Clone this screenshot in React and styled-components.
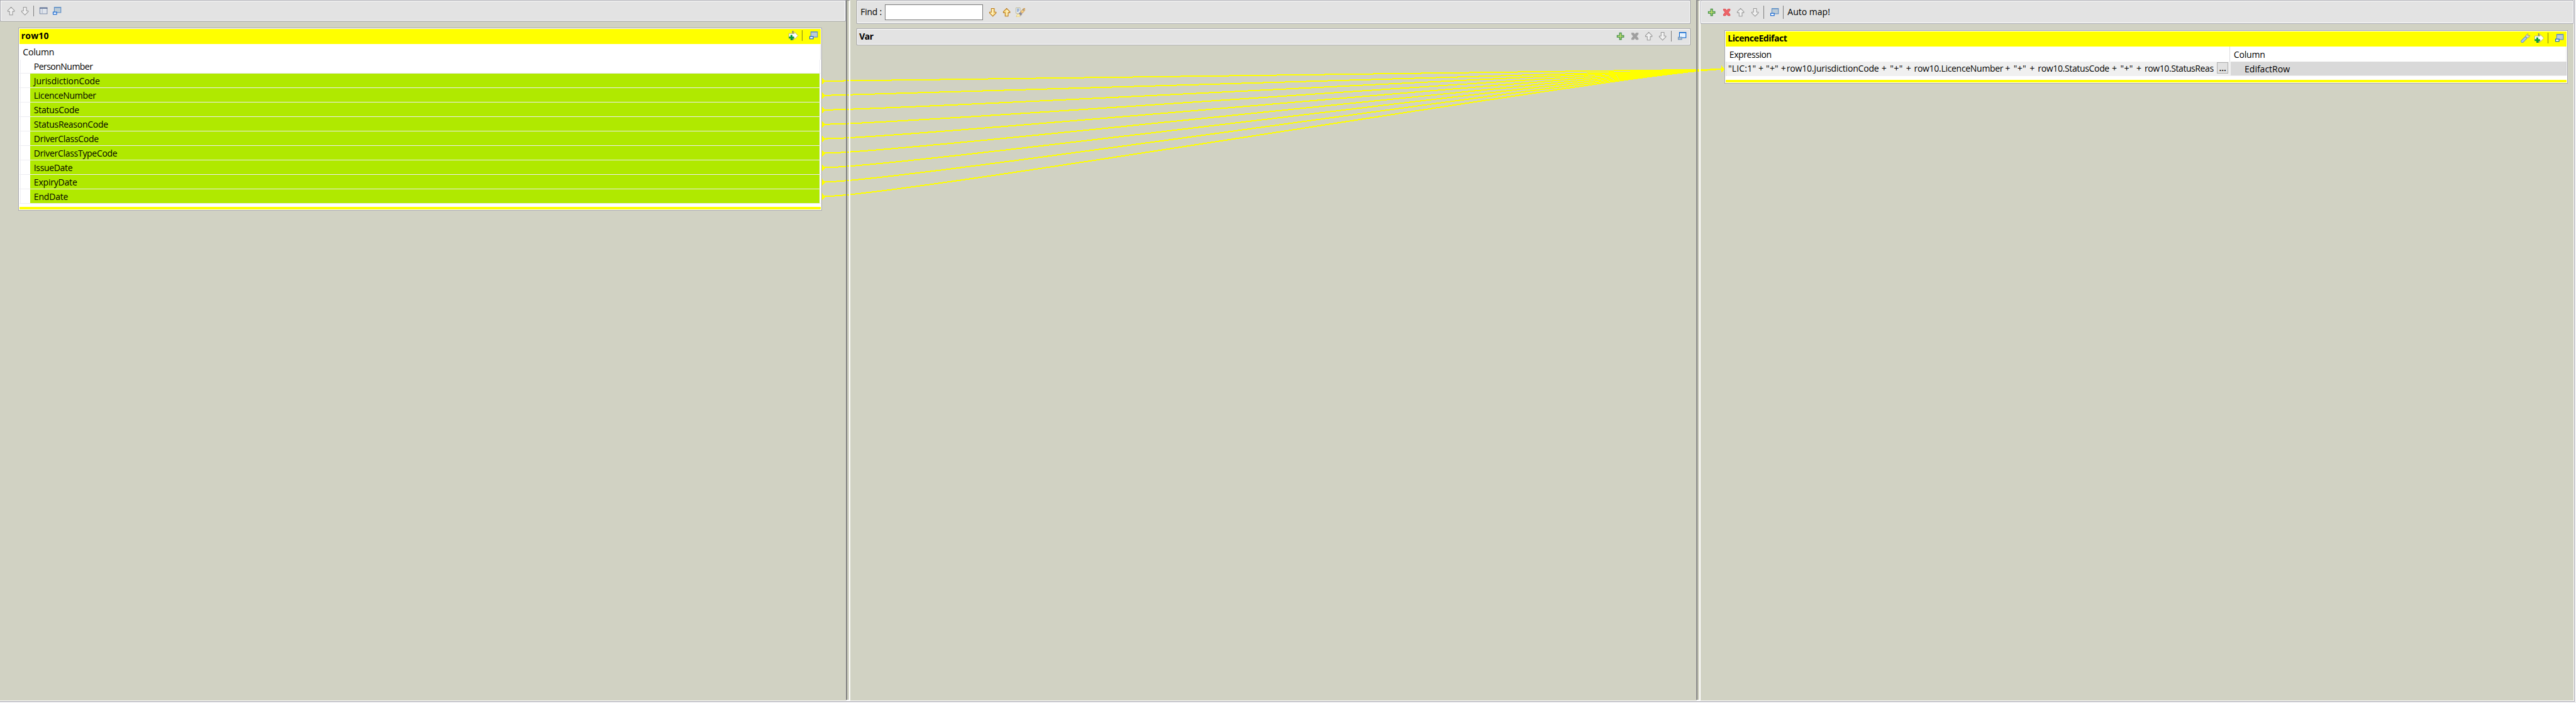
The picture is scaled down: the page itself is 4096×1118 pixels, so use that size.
import React from 'react';
import styled, { createGlobalStyle } from 'styled-components';

const K = 4096 / 4290;
const s = (n) => `${+(n * K).toFixed(3)}px`;

const C = {
  canvas: '#d1d2c3',
  bar: '#e3e3e3',
  edge: '#a9a9b0',
  yellow: '#ffff00',
  green: '#b0e900',
  line: '#ededf2',
};

const GlobalStyle = createGlobalStyle`
  * { box-sizing: border-box; }
  body { margin: 0; background: #f0f0f2; overflow: hidden; }
`;

const Window = styled.div`
  position: relative;
  width: 4096px;
  height: 1118px;
  background: #f0f0f2;
  color: #000;
  font-family: 'Open Sans', 'Noto Sans', sans-serif;
  font-size: 14px;
  line-height: 20px;
  white-space: pre;
  overflow: hidden;
`;

const Frame = styled.div`
  display: flex;
  width: ${s(4288)};
  height: ${s(1169)};
  background: ${C.canvas};
  border-right: 1px solid ${C.edge};
  border-bottom: 1px solid ${C.edge};
  box-shadow: inset -1px -1px 0 #fff;
`;

const Pane = styled.section`
  display: flex;
  flex-direction: column;
  flex: none;
  width: ${(p) => s(p.$w)};
  padding: ${(p) => p.$pad || '0'};
`;

const Sash = styled.div`
  position: relative;
  z-index: 2;
  flex: none;
  display: flex;
  width: ${s(7)};
  height: ${s(1167)};
  border-left: 1px solid #9c9c9c;
  border-top: 1px solid #8c8c8c;
  border-right: 2px solid #fff;
  border-bottom: 1px solid #fff;
  &::before {
    content: '';
    width: 1px;
    background: #6a6a6a;
  }
`;

const Toolbar = styled.header`
  display: flex;
  flex: none;
  align-items: flex-start;
  height: ${(p) => s(p.$h)};
  padding-left: ${(p) => s(p.$pl - 1)};
  background: ${C.bar};
  border: 1px solid ${C.edge};
  box-shadow: inset 0 0 0 1px #fff;
`;

const VarBar = styled(Toolbar)`
  margin-top: ${s(7)};
  justify-content: space-between;
`;

const IconGroup = styled.div`
  display: flex;
  align-items: flex-start;
  padding-right: ${(p) => s(p.$pr)};
`;

const Label = styled.span`
  flex: none;
  margin: ${(p) => p.$mt || 0}px 0 0 ${(p) => s(p.$ml || 0)};
  letter-spacing: ${(p) => p.$ls || 0}px;
  font-weight: ${(p) => (p.$bold ? 700 : 400)};
`;

const Svg = styled.svg`
  flex: none;
  display: block;
  width: ${s(16)};
  height: ${s(16)};
  margin: ${(p) => s(p.$mt)} 0 0 ${(p) => s(p.$ml || 0)};
`;

const Divider = styled.i`
  flex: none;
  width: 1px;
  height: ${(p) => s(p.$h || 18)};
  margin: ${(p) => s(p.$mt)} 0 0 ${(p) => s(p.$ml)};
  background: ${(p) => p.$c || '#808080'};
`;

const SearchField = styled.input`
  flex: none;
  width: ${s(164)};
  height: ${s(26)};
  margin: ${s(6)} 0 0 ${s(5)};
  padding: 0 4px;
  background: #fff;
  border: 1px solid #7a7a7a;
  border-radius: 0;
  font: inherit;
  outline: none;
`;

const Table = styled.article`
  position: relative;
  display: flex;
  flex-direction: column;
  flex: none;
  width: ${(p) => s(p.$w)};
  height: ${(p) => s(p.$h)};
  margin-top: ${(p) => s(p.$mt)};
  padding: 1px;
  background: #fff;
  border: 1px solid ${C.edge};
`;

const TableTitle = styled.div`
  display: flex;
  flex: none;
  justify-content: space-between;
  height: ${s(25)};
  padding-left: ${s(3.3)};
  background: ${C.yellow};
`;

const TableFoot = styled.div`
  flex: none;
  height: ${s(4)};
  margin-top: auto;
  background: ${C.yellow};
`;

const HeadRow = styled.div`
  display: flex;
  flex: none;
  height: ${s(26)};
  border-right: 1px solid #e4e4e6;
`;

const HeadCell = styled.div`
  width: ${(p) => (p.$w ? s(p.$w) : 'auto')};
  padding: 3px 0 0 ${(p) => s(p.$pl)};
  border-right: ${(p) => (p.$w ? '1px solid #dcdcde' : '0')};
`;

const Row = styled.div`
  display: flex;
  flex: none;
  height: ${s(24)};
  border-bottom: 1px solid ${C.line};
`;

const Gutter = styled.div`
  width: ${s(18)};
  margin-left: 1px;
  border-left: 1px solid ${C.line};
  margin-right: -1px;
`;

const Cell = styled.div`
  flex: 1;
  padding: 1.8px 0 0 ${s(6.3)};
  margin-right: 1px;
  border-right: 1px solid ${C.line};
  background: ${(p) => (p.$linked ? C.green : '#fff')};
  background-clip: padding-box;
  letter-spacing: ${(p) => p.$ls}px;
`;

const ExprRow = styled.div`
  display: flex;
  flex: none;
  height: ${s(24)};
  background: #f0f0f0;
  border-left: 1px solid #dedee2;
`;

const ExprText = styled.div`
  display: flex;
  flex: none;
  width: ${s(808)};
  padding: 0.6px 0 0 ${s(3)};
`;

const Token = styled.span`
  flex: none;
  width: ${(p) => s(p.$w)};
  letter-spacing: ${(p) => p.$ls}px;
  word-spacing: ${(p) => p.$ws || 0}px;
`;

const DotsButton = styled.button`
  flex: none;
  width: ${s(19)};
  height: ${s(18)};
  margin: ${s(1)} 0 0 ${s(9)};
  padding: 0;
  border: 1px solid #adadad;
  background: #e1e1e1;
  font: inherit;
  font-weight: 600;
  line-height: 15px;
  color: #000;
`;

const ColumnCell = styled.div`
  flex: 1;
  height: ${s(23)};
  margin-left: ${s(4)};
  padding: 2px 0 0 ${s(23)};
  background: #d9d9d9;
  box-shadow: inset -1px 0 0 #cacace;
`;

const Links = styled.svg`
  position: absolute;
  z-index: 1;
  left: 0;
  top: 0;
  width: 4096px;
  height: 1118px;
  pointer-events: none;
`;

/* ---------- icons ---------- */

const ARROW_UP = 'M8 1.5 13.5 7V8.5H10.5V14.5H5.5V8.5H2.5V7Z';

function ArrowIcon({ down, gold, ...p }) {
  return (
    <Svg viewBox="0 0 16 16" {...p}>
      <g transform={down ? 'rotate(180 8 8)' : undefined}>
        <path
          d={ARROW_UP}
          fill={gold ? '#fbe08c' : '#f1f1f1'}
          stroke={gold ? '#b8791c' : '#989898'}
          strokeWidth="1.1"
          strokeLinejoin="round"
        />
        {gold && <path d="M8 3.2 11.5 7H9.3V13H8Z" fill="#fff6cf" />}
      </g>
    </Svg>
  );
}

function RestoreIcon({ active, ...p }) {
  return (
    <Svg viewBox="0 0 16 16" {...p}>
      <rect x="3.6" y="1.6" width="10.8" height="8.8" fill={active ? '#e6f3ff' : '#bccbd6'} stroke={active ? '#0c66cf' : '#5f8fc6'} strokeWidth="1.2" />
      <path d="M4 2H14" stroke={active ? '#0c66cf' : '#5f8fc6'} strokeWidth="1.4" />
      <rect x="1.6" y="9.6" width="5.8" height="3.8" fill={active ? '#a9bccd' : '#fff'} stroke={active ? '#6e93bb' : '#0a60d0'} strokeWidth="1.2" />
    </Svg>
  );
}

function GridIcon(p) {
  return (
    <Svg viewBox="0 0 16 16" {...p}>
      <rect x="1.5" y="3.5" width="12" height="10" fill="#fff" stroke="#66789a" />
      <path d="M1 4H14" stroke="#56688e" strokeWidth="2" />
      <path d="M2 6.5H13M2 8.5H13M2 10.5H13M2 12.5H13" stroke="#b9c3d3" strokeWidth="0.9" />
      <path d="M5.5 5V13" stroke="#a3afc4" strokeWidth="0.9" />
    </Svg>
  );
}

function PlusIcon(p) {
  return (
    <Svg viewBox="0 0 16 16" {...p}>
      <path d="M6.5 2.5H9.5V6.5H13.5V9.5H9.5V13.5H6.5V9.5H2.5V6.5H6.5Z" fill="#a8d068" stroke="#3f8f47" strokeWidth="1.2" />
      <path d="M8 4V8H4" stroke="#d6e874" fill="none" />
    </Svg>
  );
}

function CrossIcon({ disabled, ...p }) {
  return (
    <Svg viewBox="0 0 16 16" {...p}>
      <path
        d="M2.5 2.5H6L8 5 10 2.5H13.5V4.5L10.8 8 13.5 11.5V13.5H10L8 11 6 13.5H2.5V11.5L5.2 8 2.5 4.5Z"
        fill={disabled ? '#a0a0a0' : '#ee6468'}
        stroke={disabled ? '#a0a0a0' : '#d84a50'}
        strokeWidth="0.9"
      />
    </Svg>
  );
}

function AddArrowIcon(p) {
  return (
    <Svg viewBox="0 0 16 16" {...p}>
      <path d="M.5 4.5H9.5V1.8L15.6 8 9.5 14.2V11.5H.5Z" fill="#fff" stroke="#a8a890" strokeWidth="0.9" />
      <path d="M7 0V4.5M7 11V16" stroke="#808078" strokeWidth="2" />
      <path d="M4.7 6.8V15.6M.3 11.2H9.1" stroke="#0a9a3c" strokeWidth="3.2" />
    </Svg>
  );
}

function WrenchIcon(p) {
  return (
    <Svg viewBox="0 0 16 16" {...p}>
      <path d="M9 7 12 4" stroke="#a8a89c" strokeWidth="3.4" />
      <path d="M8.6 6.2 8.6 3.4 11.6.8 12.8 1.2 11.4 3.4 12.6 4.6 15 3.4 15.4 4.6 13 7.4 9.8 7.4Z" fill="#d9d9d4" stroke="#8f8f80" strokeWidth="0.9" />
      <path d="M2.7 13.3 8 8" stroke="#6c93c9" strokeWidth="5" strokeLinecap="round" />
      <path d="M2.7 13.3 8 8" stroke="#a9c9ee" strokeWidth="2.8" strokeLinecap="round" />
    </Svg>
  );
}

function HighlightIcon(p) {
  return (
    <Svg viewBox="0 0 16 16" {...p}>
      <path d="M.5.5H7.5V9.5H.5Z" fill="#f4f8ff" stroke="#b9b48c" />
      <path d="M2 2.5H6M2 4.5H6M2 6.5H5" stroke="#4f78b4" />
      <path d="M1 15.5 3 10.5 8 14 7 15.5Z" fill="#fff3b0" stroke="#d6b869" strokeWidth="0.7" />
      <path d="M5 9.5 8 7.5 11 10.5 8.5 14Z" fill="#8f8a92" />
      <path d="M8.5 7 13 1.5H15.5V4.5L11 9.5Z" fill="#f7cf86" stroke="#c48a3a" strokeWidth="0.9" />
      <circle cx="13" cy="4" r="1" fill="#5d6f94" />
    </Svg>
  );
}

/* ---------- data ---------- */

const INPUT_COLUMNS = [
  ['PersonNumber', -0.53, false],
  ['JurisdictionCode', -0.08, true],
  ['LicenceNumber', -0.3, true],
  ['StatusCode', -0.22, true],
  ['StatusReasonCode', -0.27, true],
  ['DriverClassCode', -0.27, true],
  ['DriverClassTypeCode', -0.3, true],
  ['IssueDate', -0.35, true],
  ['ExpiryDate', -0.2, true],
  ['EndDate', -0.19, true],
];

const EXPRESSION = [
  ['"LIC:1" + "+" +', 97.3, 0.2],
  ['row10.JurisdictionCode', 152.7, -0.2],
  [' + "+" + ', 59.6, 0.35, 1.2],
  ['row10.LicenceNumber', 146.2, -0.3],
  [' + "+" + ', 59.9, 0.35, 1.2],
  ['row10.StatusCode', 117.8, -0.34],
  [' + "+" + ', 60, 0.35, 1.2],
  ['row10.StatusReas', 113, -0.42],
];

const LINKS = Array.from({ length: 9 }, (_, i) => 135 + i * 24);

function MappingLinks() {
  return (
    <Links viewBox="0 0 4290 1171" preserveAspectRatio="none" shapeRendering="crispEdges">
      {LINKS.map((y) => (
        <g key={y}>
          <path d={`M1369 ${y - 5.5}V${y + 6}L1374.5 ${y + 0.5}Z`} fill={C.yellow} />
          <path
            d={`M1372 ${y}H1374C1499 ${y} 2742 115.5 2867 115.5`}
            fill="none"
            stroke={C.yellow}
            strokeWidth="2.1"
          />
        </g>
      ))}
      <path d="M2867 109V121L2872 115.5Z" fill={C.yellow} />
    </Links>
  );
}

export default function App() {
  return (
    <Window>
      <GlobalStyle />
      <Frame>
        <Pane $w={1409}>
          <Toolbar $h={36} $pl={10}>
            <ArrowIcon $mt={9} />
            <ArrowIcon down $mt={9} $ml={7} />
            <Divider $mt={8} $ml={6} />
            <GridIcon $mt={8} $ml={9} />
            <RestoreIcon $mt={9} $ml={6} />
          </Toolbar>
          <Pane $w={1409} $pad={`0 0 0 ${s(30)}`}>
            <Table $w={1339} $h={305} $mt={10}>
              <TableTitle>
                <Label $bold $ls={0.17} $mt={1}>row10</Label>
                <IconGroup $pr={4}>
                  <AddArrowIcon $mt={3} />
                  <Divider $mt={2} $ml={6} $c="#80801a" />
                  <RestoreIcon $mt={3} $ml={10} />
                </IconGroup>
              </TableTitle>
              <HeadRow>
                <HeadCell $pl={6}>
                  <Label $ls={-0.17}>Column</Label>
                </HeadCell>
              </HeadRow>
              {INPUT_COLUMNS.map(([name, ls, linked]) => (
                <Row key={name}>
                  <Gutter />
                  <Cell $linked={linked} $ls={ls}>{name}</Cell>
                </Row>
              ))}
              <TableFoot />
            </Table>
          </Pane>
        </Pane>

        <Sash />

        <Pane $w={1409} $pad={`0 ${s(10)}`}>
          <Toolbar $h={40} $pl={7}>
            <Label $ls={-0.26} $mt={8}>Find :</Label>
            <SearchField aria-label="Find" />
            <ArrowIcon gold down $mt={11} $ml={8} />
            <ArrowIcon gold $mt={11} $ml={7} />
            <HighlightIcon $mt={11} $ml={7} />
          </Toolbar>
          <VarBar $h={28} $pl={5}>
            <Label $bold $ls={-0.57} $mt={2}>Var</Label>
            <IconGroup $pr={5}>
              <PlusIcon $mt={4} />
              <CrossIcon disabled $mt={4} $ml={8} />
              <ArrowIcon $mt={4} $ml={6.5} />
              <ArrowIcon down $mt={4} $ml={7} />
              <Divider $mt={3} $ml={6} />
              <RestoreIcon active $mt={4.5} $ml={9.5} />
            </IconGroup>
          </VarBar>
        </Pane>

        <Sash />

        <Pane $w={1454}>
          <Toolbar $h={40} $pl={11}>
            <PlusIcon $mt={11} />
            <CrossIcon $mt={11} $ml={8.5} />
            <ArrowIcon $mt={11} $ml={7.5} />
            <ArrowIcon down $mt={11} $ml={8} />
            <Divider $mt={8} $ml={6} $h={22} />
            <RestoreIcon $mt={11} $ml={9} />
            <Divider $mt={8} $ml={6} $h={22} />
            <Label $mt={8} $ml={7}>Auto map!</Label>
          </Toolbar>
          <Pane $w={1454} $pad={`0 0 0 ${s(40)}`}>
            <Table $w={1404} $h={89} $mt={10}>
              <TableTitle>
                <Label $bold $ls={-0.45} $mt={1}>LicenceEdifact</Label>
                <IconGroup $pr={4}>
                  <WrenchIcon $mt={3} />
                  <AddArrowIcon $mt={3} $ml={7} />
                  <Divider $mt={2} $ml={6} $c="#80801a" />
                  <RestoreIcon $mt={3} $ml={10} />
                </IconGroup>
              </TableTitle>
              <HeadRow>
                <HeadCell $w={840} $pl={6}>
                  <Label $ls={-0.43}>Expression</Label>
                </HeadCell>
                <HeadCell $pl={6}>
                  <Label $ls={-0.17}>Column</Label>
                </HeadCell>
              </HeadRow>
              <ExprRow>
                <ExprText>
                  {EXPRESSION.map(([t, w, ls, ws], i) => (
                    <Token key={i} $w={w} $ls={ls} $ws={ws}>{t}</Token>
                  ))}
                </ExprText>
                <DotsButton>...</DotsButton>
                <ColumnCell>
                  <Label>EdifactRow</Label>
                </ColumnCell>
              </ExprRow>
              <TableFoot />
            </Table>
          </Pane>
        </Pane>
      </Frame>
      <MappingLinks />
    </Window>
  );
}
